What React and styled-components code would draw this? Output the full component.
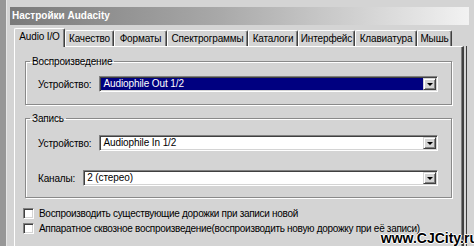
import styled, { createGlobalStyle } from "styled-components";

const GlobalStyle = createGlobalStyle`
  html, body {
    margin: 0;
    padding: 0;
    background: #d4d4d4;
  }
  body {
    font-family: "Liberation Sans", Arial, sans-serif;
    font-size: 10px;
    letter-spacing: -0.3px;
    color: #000;
  }
`;

const Screen = styled.div`
  position: relative;
  display: flex;
  width: 474px;
  height: 246px;
  overflow: hidden;
  background: #d4d4d4;
`;

const Desk = styled.div`
  flex: none;
  width: 6px;
  background: #979797;
`;

const Window = styled.div`
  flex: 1;
  min-width: 0;
  display: flex;
  flex-direction: column;
  padding: 7px 0 0 3px;
  border-left: 1px solid #e6e6e6;
`;

const TitleBar = styled.div`
  height: 18px;
  margin-right: 5px;
  padding-left: 2px;
  line-height: 18px;
  font-weight: bold;
  font-size: 10px;
  letter-spacing: 0;
  color: #fff;
  background: linear-gradient(to right, #7a7a7a 0%, #a8a8a8 45%, #f2f2f2 100%);
`;

const Body = styled.div`
  min-width: 0;
  display: flex;
  flex-direction: column;
  padding: 2px 10px 0 4px;
`;

const TabRow = styled.div`
  display: flex;
  align-items: flex-end;
  height: 19px;
  min-width: 0;
  position: relative;
  z-index: 1;
`;

const Tab = styled.div`
  flex: none;
  box-sizing: border-box;
  width: ${(p) => p.$w}px;
  height: ${(p) => (p.$active ? "19px" : "16px")};
  margin-bottom: ${(p) => (p.$active ? "-1px" : "0")};
  line-height: ${(p) => (p.$active ? "16px" : "15px")};
  text-align: center;
  letter-spacing: -0.15px;
  background: #d4d4d4;
  border-left: 1px solid #fff;
  border-top: 1px solid #fff;
  border-right: 1px solid #404040;
  box-shadow: inset -1px 0 0 #808080;
  border-radius: 2px 2px 0 0;
  white-space: nowrap;
  & + & {
    border-left-color: ${(p) => (p.$afterActive ? "transparent" : "#fff")};
  }
`;

const Panel = styled.div`
  height: 220px;
  padding: 8px 10px 0 10px;
  background: #d4d4d4;
  border-left: 1px solid #fff;
  border-top: 1px solid #fff;
  border-right: 2px solid #404040;
  box-shadow: inset -1px 0 0 #808080, 2px 0 0 #d4d4d4, 3px 0 0 #404040;
  display: flex;
  flex-direction: column;
`;

const Group = styled.fieldset`
  margin: 0 0 ${(p) => p.$gap || 0}px 0;
  padding: 0;
  border: 1px solid #8a8a8a;
  box-shadow: inset 1px 1px 0 #fff, 1px 1px 0 #fff;
  min-width: 0;
`;

const Legend = styled.legend`
  margin-left: 4px;
  padding: 0 2px;
  line-height: 13px;
  letter-spacing: -0.15px;
`;

const GroupBody = styled.div`
  display: flex;
  flex-direction: column;
  gap: 19px;
  padding: ${(p) => p.$top}px 13px ${(p) => p.$bottom}px 12px;
`;

const FieldRow = styled.div`
  display: flex;
  align-items: center;
  gap: 8px;
  height: 16px;
`;

const FieldLabel = styled.span`
  flex: none;
  white-space: nowrap;
  letter-spacing: -0.15px;
`;

const Combo = styled.div`
  flex: 1;
  min-width: 0;
  display: flex;
  height: 16px;
  box-sizing: border-box;
  border-top: 1px solid #808080;
  border-left: 1px solid #808080;
  border-right: 1px solid #fff;
  border-bottom: 1px solid #fff;
  box-shadow: inset 1px 1px 0 #404040, inset -1px -1px 0 #d4d4d4;
  background: #fff;
  padding: 1px;
`;

const ComboValue = styled.div`
  flex: 1;
  min-width: 0;
  padding-left: 2px;
  line-height: 12px;
  letter-spacing: -0.1px;
  background: ${(p) => (p.$selected ? "#000080" : "#fff")};
  color: ${(p) => (p.$selected ? "#fff" : "#000")};
  white-space: nowrap;
  overflow: hidden;
`;

const DropButton = styled.div`
  flex: none;
  width: 13px;
  box-sizing: border-box;
  display: flex;
  align-items: center;
  justify-content: center;
  background: #d4d4d4;
  border-top: 1px solid #d4d4d4;
  border-left: 1px solid #d4d4d4;
  border-right: 1px solid #404040;
  border-bottom: 1px solid #404040;
  box-shadow: inset 1px 1px 0 #fff, inset -1px -1px 0 #808080;
  &::after {
    content: "";
    width: 0;
    height: 0;
    border-left: 3px solid transparent;
    border-right: 3px solid transparent;
    border-top: 3px solid #000;
    margin-top: 1px;
  }
`;

const Checks = styled.div`
  display: flex;
  flex-direction: column;
  gap: 1px;
  margin-top: 8px;
`;

const CheckRow = styled.label`
  display: flex;
  align-items: center;
  height: 14px;
  margin-left: -2px;
  white-space: nowrap;
`;

const CheckBox = styled.span`
  flex: none;
  width: 11px;
  height: 11px;
  box-sizing: border-box;
  margin-right: 5px;
  background: #fff;
  border-top: 1px solid #808080;
  border-left: 1px solid #808080;
  border-right: 1px solid #fff;
  border-bottom: 1px solid #fff;
  box-shadow: inset 1px 1px 0 #404040, inset -1px -1px 0 #d4d4d4;
`;

const Watermark = styled.div`
  position: absolute;
  right: -4px;
  bottom: 0;
  font-family: "Liberation Sans", Arial, sans-serif;
  font-weight: bold;
  font-size: 14px;
  letter-spacing: 0;
  color: #000;
  text-shadow: 1px 0 0 #fff, -1px 0 0 #fff, 0 1px 0 #fff, 0 -1px 0 #fff;
`;

const tabs = [
  { label: "Audio I/O", w: 51 },
  { label: "Качество", w: 49 },
  { label: "Форматы", w: 53 },
  { label: "Спектрограммы", w: 81 },
  { label: "Каталоги", w: 50 },
  { label: "Интерфейс", w: 57 },
  { label: "Клавиатура", w: 62 },
  { label: "Мышь", w: 35 },
];

export default function App() {
  return (
    <Screen>
      <GlobalStyle />
      <Desk />
      <Window>
        <TitleBar>Настройки Audacity</TitleBar>
        <Body>
          <TabRow>
            {tabs.map((t, i) => (
              <Tab key={t.label} $w={t.w} $active={i === 0} $afterActive={i === 1}>
                {t.label}
              </Tab>
            ))}
          </TabRow>
          <Panel>
            <Group $gap={7}>
              <Legend>Воспроизведение</Legend>
              <GroupBody $top={8} $bottom={12}>
                <FieldRow>
                  <FieldLabel>Устройство:</FieldLabel>
                  <Combo>
                    <ComboValue $selected>Audiophile Out 1/2</ComboValue>
                    <DropButton />
                  </Combo>
                </FieldRow>
              </GroupBody>
            </Group>
            <Group>
              <Legend>Запись</Legend>
              <GroupBody $top={10} $bottom={11}>
                <FieldRow>
                  <FieldLabel>Устройство:</FieldLabel>
                  <Combo>
                    <ComboValue>Audiophile In 1/2</ComboValue>
                    <DropButton />
                  </Combo>
                </FieldRow>
                <FieldRow>
                  <FieldLabel>Каналы:</FieldLabel>
                  <Combo>
                    <ComboValue>2 (стерео)</ComboValue>
                    <DropButton />
                  </Combo>
                </FieldRow>
              </GroupBody>
            </Group>
            <Checks>
              <CheckRow>
                <CheckBox />
                Воспроизводить существующие дорожки при записи новой
              </CheckRow>
              <CheckRow>
                <CheckBox />
                Аппаратное сквозное воспроизведение(воспроизводить новую дорожку при её записи)
              </CheckRow>
            </Checks>
          </Panel>
        </Body>
      </Window>
      <Watermark>www.CJCity.ru</Watermark>
    </Screen>
  );
}
